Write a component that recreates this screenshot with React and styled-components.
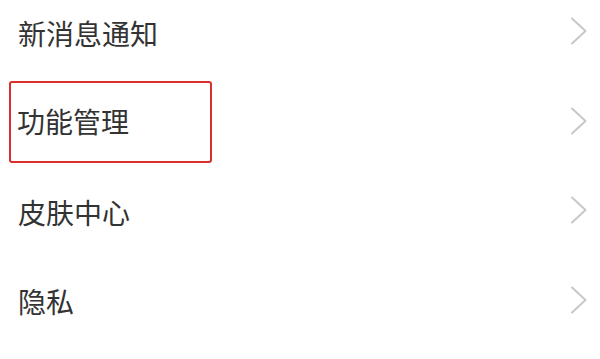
import React from "react"
import styled, { createGlobalStyle } from "styled-components"

const GlobalStyle = createGlobalStyle`
  html, body {
    margin: 0;
    padding: 0;
    background: #fff;
    overflow: hidden;
  }
  body {
    font-family: "Noto Sans CJK SC", "Noto Sans", sans-serif;
  }
`

const items = [
  { label: "新消息通知" },
  { label: "功能管理", highlight: true },
  { label: "皮肤中心" },
  { label: "隐私" },
]

const App = () => {
  return (
    <>
      <GlobalStyle />
      <List>
        {items.map((item) => (
          <Row key={item.label}>
            <Label $highlight={item.highlight}>{item.label}</Label>
            <Chevron viewBox='0 0 18 28' aria-hidden='true'>
              <polyline points='2,1.5 15.5,14 2,26.5' />
            </Chevron>
          </Row>
        ))}
      </List>
    </>
  )
}

const List = styled.ul`
  list-style: none;
  margin: -12px 0 0;
  padding: 0;
  width: 600px;
  background: #fff;
`

const Row = styled.li`
  display: flex;
  align-items: center;
  justify-content: space-between;
  height: 89.5px;
  padding: 0 12px 0 18px;
  box-sizing: border-box;
`

const Label = styled.span`
  display: flex;
  align-items: center;
  font-size: 28px;
  line-height: 1;
  color: #333;
  letter-spacing: 0;
  ${({ $highlight }) =>
    $highlight &&
    `
    box-sizing: border-box;
    width: 203px;
    height: 82px;
    margin-left: -9px;
    padding: 0 0 2px 6px;
    border: 2.5px solid #d9302b;
    border-radius: 3px;
  `}
`

const Chevron = styled.svg`
  width: 18px;
  height: 28px;
  margin-top: -3px;
  fill: none;
  stroke: #c8c8c8;
  stroke-width: 2;
  stroke-linecap: round;
  stroke-linejoin: round;
`

export default App
